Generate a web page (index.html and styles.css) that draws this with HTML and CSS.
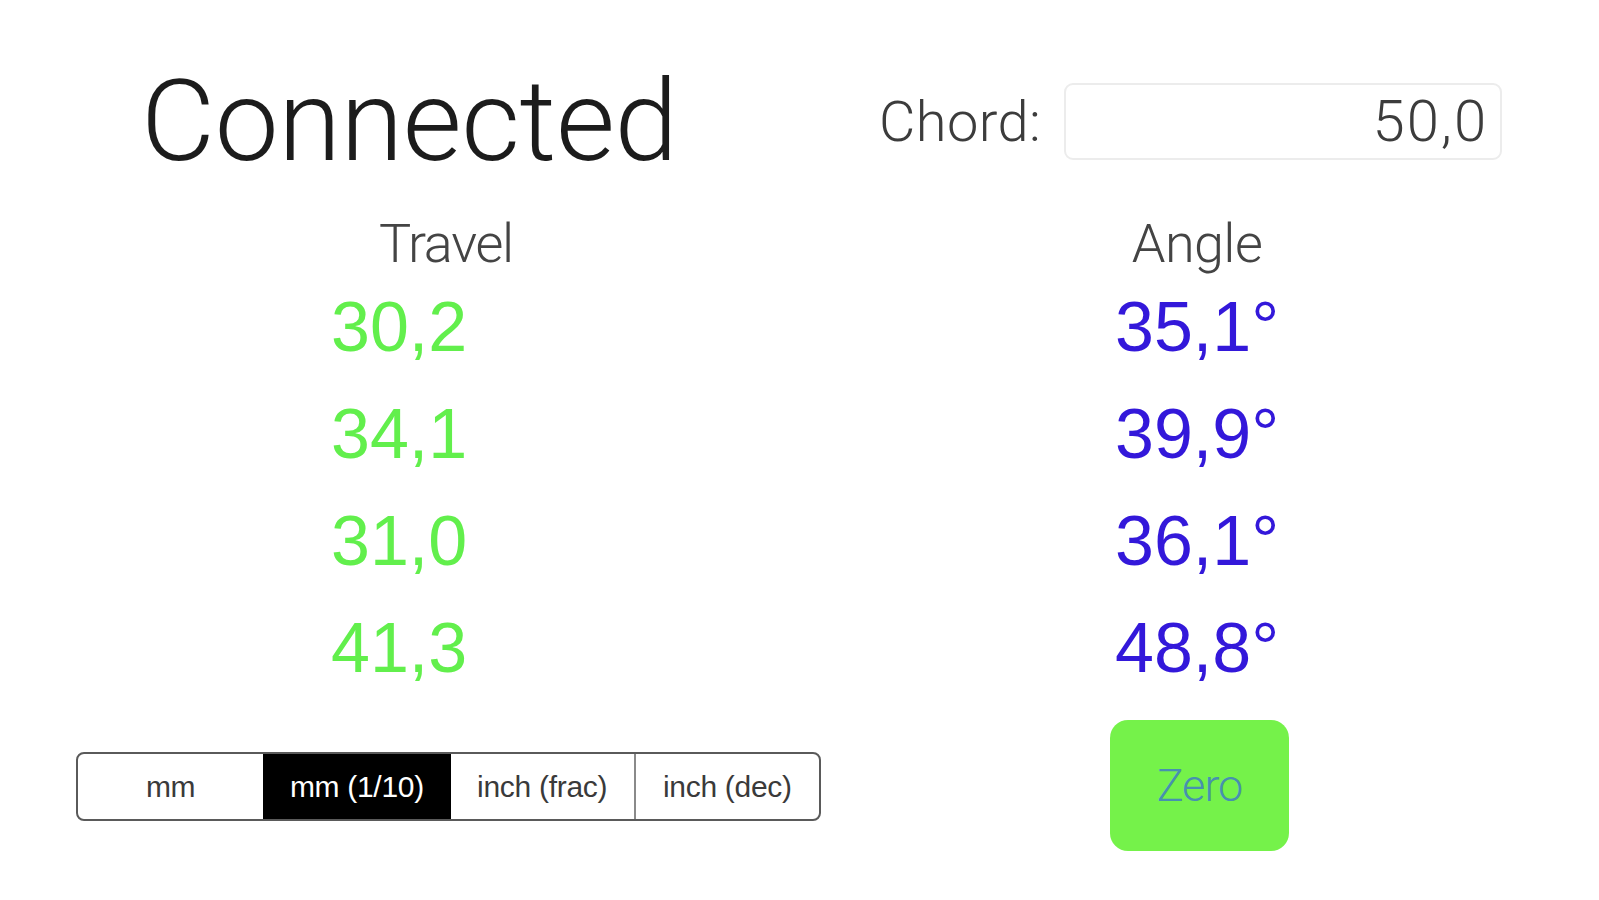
FILE: index.html
```html
<!DOCTYPE html>
<html>
<head>
<meta charset="utf-8">
<link rel="stylesheet" href="styles.css">
</head>
<body>
<div class="app">
  <header class="top">
    <h1 class="status">Connected</h1>
    <div class="chord">
      <span class="chord-label">Chord:</span>
      <div class="chord-input">50,0</div>
    </div>
  </header>
  <main class="cols">
    <section class="col col-travel">
      <div class="col-title">Travel</div>
      <ul class="values travel">
        <li>30,2</li>
        <li>34,1</li>
        <li>31,0</li>
        <li>41,3</li>
      </ul>
      <div class="seg">
        <div class="seg-item">mm</div>
        <div class="seg-item active">mm (1/10)</div>
        <div class="seg-item">inch (frac)</div>
        <div class="seg-item">inch (dec)</div>
      </div>
    </section>
    <section class="col col-angle">
      <div class="col-title">Angle</div>
      <ul class="values angle">
        <li>35,1°</li>
        <li>39,9°</li>
        <li>36,1°</li>
        <li>48,8°</li>
      </ul>
      <div class="zero-wrap"><button class="zero">Zero</button></div>
    </section>
  </main>
</div>
</body>
</html>
```

FILE: styles.css
```css
* { box-sizing: border-box; }
html, body { margin: 0; padding: 0; background: #ffffff; }
body {
  width: 1599px;
  height: 900px;
  overflow: hidden;
  font-family: "Liberation Sans", Arial, sans-serif;
}
.app { padding-top: 65px; }
.top {
  display: flex;
  align-items: center;
  height: 113px;
}
.status {
  margin: 0 0 0 141px;
  font-family: Roboto, "Liberation Sans", Arial, sans-serif;
  font-size: 114px;
  line-height: 113px;
  font-weight: 300;
  letter-spacing: -0.4px;
  color: #1c1c1c;
  width: 738px;
}
.chord {
  display: flex;
  align-items: center;
  gap: 23px;
}
.chord-label {
  font-family: Roboto, "Liberation Sans", Arial, sans-serif;
  font-weight: 300;
  font-size: 56px;
  line-height: 60px;
  letter-spacing: 0.4px;
  color: #3c3c3c;
}
.chord-input {
  width: 438px;
  height: 77px;
  border: 2px solid #ececec;
  border-radius: 9px;
  text-align: right;
  padding-right: 12px;
  font-family: Roboto, "Liberation Sans", Arial, sans-serif;
  font-weight: 300;
  font-size: 58px;
  line-height: 73px;
  letter-spacing: 2px;
  color: #3c3c3c;
}
.cols {
  display: grid;
  grid-template-columns: 892px 610px;
  margin-top: 36px;
}
.col { display: flex; flex-direction: column; }
.col-title {
  text-align: center;
  font-family: Roboto, "Liberation Sans", Arial, sans-serif;
  font-weight: 300;
  font-size: 54px;
  line-height: 60px;
  letter-spacing: -1.3px;
  color: #444444;
}
.col-angle .col-title { letter-spacing: -0.6px; }
.values {
  list-style: none;
  margin: 0;
  padding: 0;
  font-size: 70px;
  line-height: 107px;
}
.travel { padding-left: 331px; color: #62ef4c; }
.angle { padding-left: 223px; color: #3318da; }
.seg {
  margin: 50px 0 0 76px;
  width: 745px;
  height: 69px;
  display: grid;
  grid-template-columns: repeat(4, 1fr);
  border: 2px solid #5a5a5a;
  border-radius: 8px;
  overflow: hidden;
}
.seg-item {
  display: flex;
  align-items: center;
  justify-content: center;
  font-size: 30px;
  letter-spacing: -0.3px;
  color: #3a3a3a;
  border-left: 2px solid #8a8a8a;
}
.seg-item:first-child { border-left: none; }
.seg-item.active { background: #000000; color: #ffffff; border-left-color: #000; }
.seg-item.active + .seg-item { border-left-color: #000; }
.zero-wrap { padding-left: 218px; margin-top: 18px; }
.zero {
  width: 179px;
  height: 131px;
  border: none;
  border-radius: 18px;
  background: #75f24a;
  color: #4790b0;
  font-family: Roboto, "Liberation Sans", Arial, sans-serif;
  font-weight: 300;
  font-size: 45px;
  letter-spacing: -1px;
  padding: 0;
}
```
